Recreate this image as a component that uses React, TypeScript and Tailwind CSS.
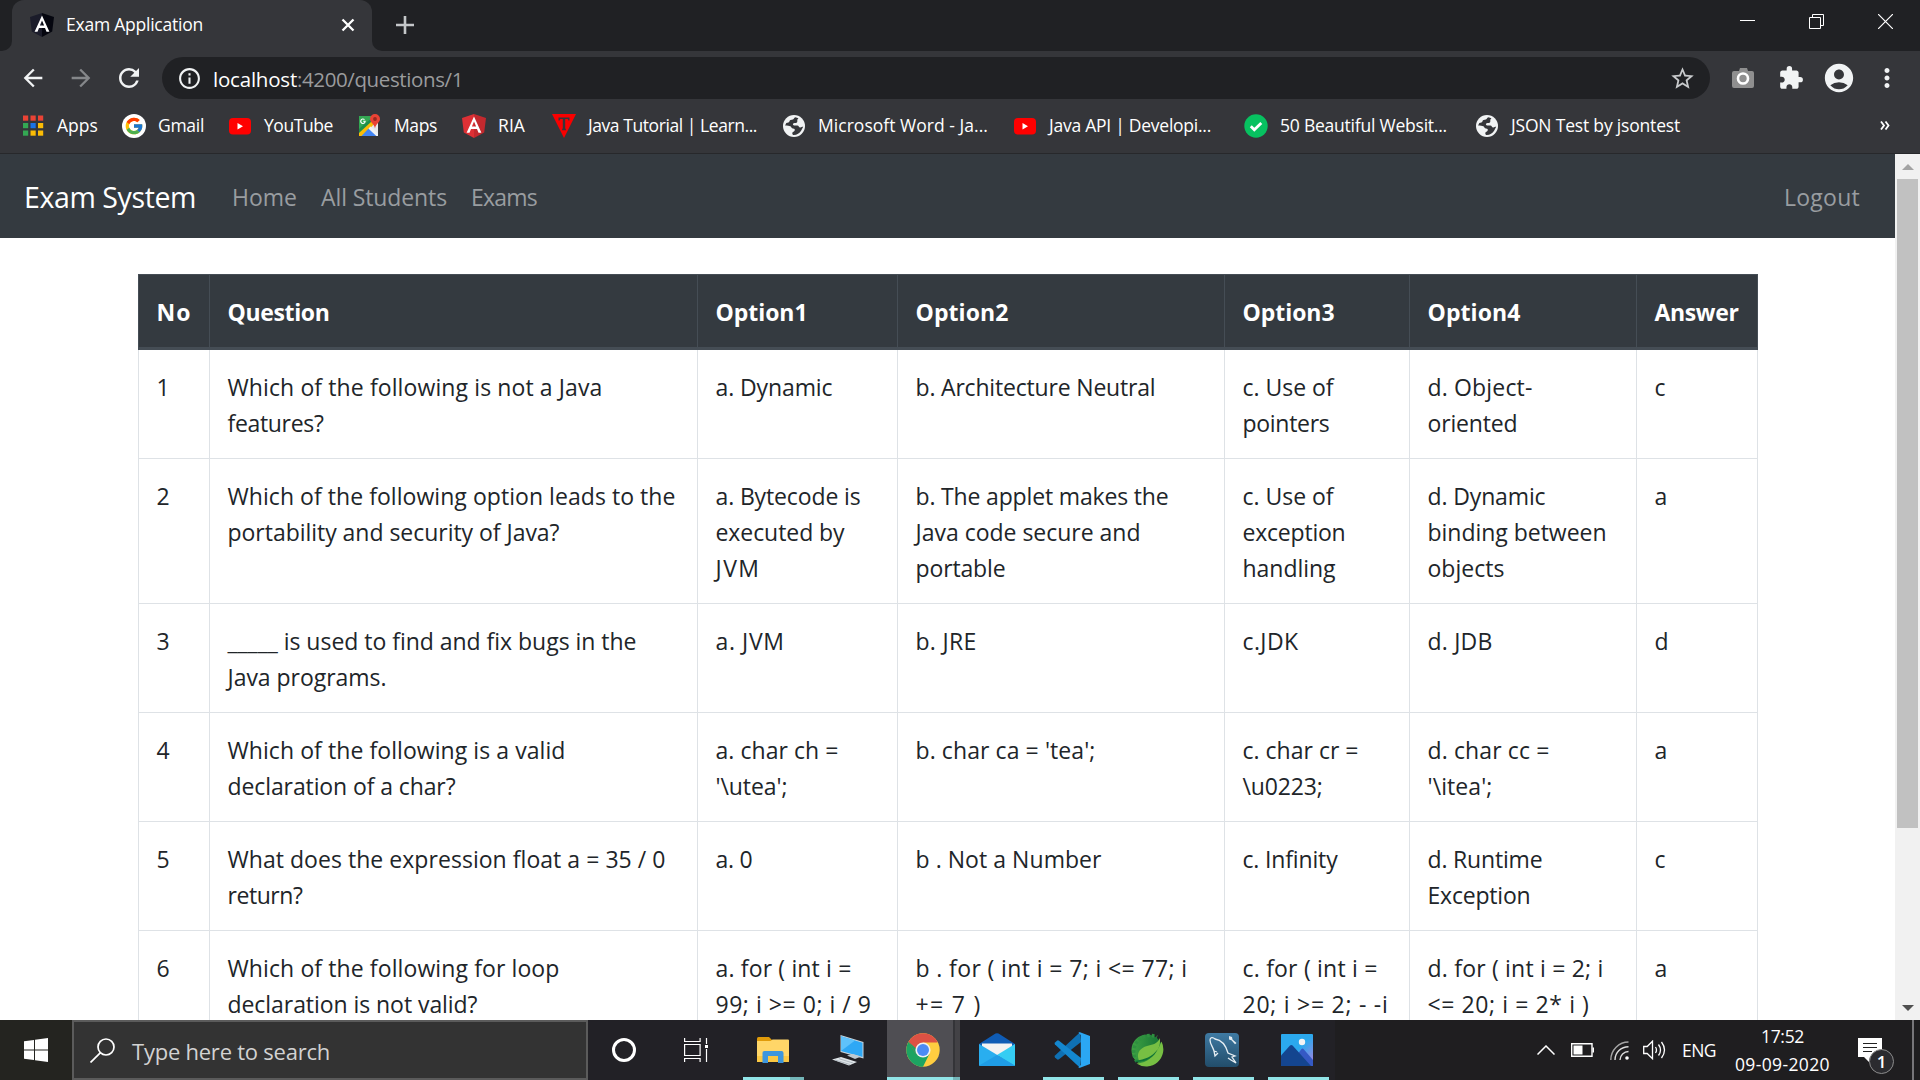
import React, { useLayoutEffect, useRef } from "react";
import {
  MdAccountCircle,
  MdArrowBack,
  MdArrowForward,
  MdExtension,
  MdInfoOutline,
  MdMoreVert,
  MdRefresh,
  MdStarBorder,
} from "react-icons/md";
import { FcGoogle } from "react-icons/fc";

/** A single line of text whose tracking is tuned so that it spans `w` pixels. */
function Line({ w, className = "", children }: { w: number; className?: string; children: string }) {
  const ref = useRef<HTMLSpanElement>(null);
  useLayoutEffect(() => {
    const el = ref.current;
    if (!el) return;
    el.style.letterSpacing = "0px";
    const natural = el.getBoundingClientRect().width;
    el.style.letterSpacing = `${(w - natural) / children.length}px`;
  }, [w, children]);
  return (
    <span ref={ref} className={`inline-block whitespace-pre ${className}`}>
      {children}
    </span>
  );
}

/* ---------- icons ---------- */

function AngularIcon({ left, right, className = "" }: { left: string; right: string; className?: string }) {
  return (
    <svg viewBox="0 0 24 24" className={`h-6 w-6 ${className}`}>
      <path d="M12 0 0 4l1.800 14.600L12 24z" fill={left} />
      <path d="M12 0 24 4l-1.800 14.600L12 24z" fill={right} />
      <path d="M12 2.500 4.600 18.700h2.900l1.500-3.700h6l1.500 3.700h2.900zm2.100 10h-4.200L12 7.500z" fill="#fff" />
    </svg>
  );
}

function AppsIcon() {
  const colors = ["#ea4335", "#ea4335", "#ea4335", "#34a853", "#1a73e8", "#fbbc05", "#34a853", "#fbbc05", "#fbbc05"];
  return (
    <svg viewBox="0 0 24 24" className="h-6 w-6">
      {colors.map((c, i) => (
        <rect key={i} x={2 + (i % 3) * 7.5} y={1.5 + Math.floor(i / 3) * 7.5} width="5.2" height="5.2" fill={c} />
      ))}
    </svg>
  );
}

function GmailIcon() {
  return (
    <span className="flex h-6 w-6 items-center justify-center rounded-full bg-white">
      <FcGoogle size={20} />
    </span>
  );
}

function YouTubeIcon() {
  return (
    <svg viewBox="0 0 24 24" className="h-6 w-6">
      <rect x="1" y="4" width="22" height="16.5" rx="4" fill="#f00" />
      <path d="M9.500 9 15 12.200l-5.500 3.200z" fill="#fff" />
    </svg>
  );
}

function MapsIcon() {
  return (
    <svg viewBox="0 0 24 24" className="h-6 w-6">
      <path d="M1 2h19v20H1z" fill="#e8eaed" />
      <path d="M1 2h14L1 17z" fill="#34a853" />
      <path d="M1 17.500 15 3l2 6L5 22H1z" fill="#fbbc05" />
      <path d="M1 15 13 4v4L1 19z" fill="#1e8e4a" />
      <path d="m10.500 14.500 8 7.500h-15z" fill="#4285f4" />
      <path d="m10.500 14.500 2-2L20 20v2h-1.500z" fill="#f1f3f4" />
      <path d="M7.600 6.800H5.200v1h1.300c-.2.8-.7 1.100-1.400 1.100a1.700 1.700 0 1 1 1-3l.8-.7a2.800 2.800 0 1 0 .8 1.600z" fill="#fff" />
      <path d="M17 0a5 5 0 0 0-5 5c0 3.500 4.200 4.500 5 9.500.8-5 5-6 5-9.500a5 5 0 0 0-5-5z" fill="#ea4335" />
      <circle cx="17" cy="5" r="1.900" fill="#962a21" />
    </svg>
  );
}

function TutorialIcon() {
  return (
    <svg viewBox="0 0 24 24" className="h-6 w-6">
      <path d="M0 0h24L12 24z" fill="#f90000" />
      <path d="M6.500 3.500h11v3h-1.200l-.6-1.400h-2.500v9l1 2.200h-4.400l1-2.200v-9H8.300l-.6 1.400H6.500z" fill="#35363a" />
    </svg>
  );
}

function GlobeIcon() {
  return (
    <svg viewBox="0 0 24 24" className="h-6 w-6">
      <circle cx="12" cy="12" r="11" fill="#f1f3f4" />
      <path
        d="M13.500 3.200c-2 .4-1.200 1.900-2.600 2.400-1.600.5-3 .2-3.400 1.700-.3 1.200-1.600 1.600-3.200 1.600l-1.200 2.600c2.400.2 4 .2 5.300.8 1.300.7 1 2.200 2.600 2.300 1.500.1 2 .6 1.700 1.800-.5 1.400-1.900 1-2.300 2.300-.3 1 .1 1.700.7 2.300 3.300.3 6.300-1.400 8-4.200l2.100-4c-1.300-.1-1.800.7-3 .6-1.500-.1-1.300-1.900-2.900-2-1.700-.1-3.800.6-4.300-.6-.6-1.400 1.300-1.800 2.700-1.800 1.500 0 1.700-1.300 1.600-2.300-.1-1.300.6-1.900 1.100-2.400z"
        fill="#35363a"
      />
    </svg>
  );
}

function CheckIcon() {
  return (
    <svg viewBox="0 0 24 24" className="h-6 w-6">
      <circle cx="12" cy="12" r="11.700" fill="#07c160" />
      <path d="m6.800 12.200 3.500 3.500 7-6.700" fill="none" stroke="#fff" strokeWidth="2.800" />
    </svg>
  );
}

/* ---------- browser chrome ---------- */

function TabStrip() {
  return (
    <div className="flex h-[51px] bg-[#202124]">
      <div className="flex w-3 items-end bg-[#35363a]">
        <div className="h-full w-3 rounded-br-[10px] bg-[#202124]" />
      </div>
      <div className="flex w-[360px] items-center rounded-t-[12px] bg-[#35363a] pb-px pl-[18px]">
        <AngularIcon left="#1b1c2a" right="#05060f" />
        <div className="ml-3 flex-1 pb-px text-[17.500px] text-white">
          <Line w={137}>Exam Application</Line>
        </div>
        <svg viewBox="0 0 14 14" className="mr-[17px] h-[14px] w-[14px]">
          <path d="m1.500 1.500 11 11m0-11-11 11" stroke="#fff" strokeWidth="2.300" />
        </svg>
      </div>
      <div className="w-3 bg-[#35363a]">
        <div className="h-full w-3 rounded-bl-[10px] bg-[#202124]" />
      </div>
      <div className="flex flex-1 items-center pb-px">
        <svg viewBox="0 0 18 18" className="ml-3 h-[18px] w-[18px]">
          <path d="M9 0v18M0 9h18" stroke="#c4c7c9" strokeWidth="2.600" />
        </svg>
      </div>
      <div className="mt-[14px] flex gap-[54px] pr-[27px]">
        <svg viewBox="0 0 15 15" className="h-[15px] w-[15px]">
          <path d="M0 6.500h15" stroke="#fff" />
        </svg>
        <svg viewBox="0 0 15 15" className="h-[15px] w-[15px]" fill="none" stroke="#fff">
          <path d="M.5 3.500h11v11H.5zM3.500 3.500v-3h11v11h-3" />
        </svg>
        <svg viewBox="0 0 15 15" className="h-[15px] w-[15px]">
          <path d="m0 0 15 15M15 0 0 15" stroke="#fff" strokeWidth="1.200" />
        </svg>
      </div>
    </div>
  );
}

function Toolbar() {
  return (
    <div className="flex h-[54px] items-center bg-[#35363a] pl-[19px] text-[#f1f3f4]">
      <MdArrowBack size={28} className="mb-px" />
      <MdArrowForward size={28} className="mb-px ml-5 text-[#85878a]" />
      <MdRefresh size={30} className="mb-px ml-[19px]" />
      <div className="ml-[18px] flex h-[42px] w-[1548px] items-center rounded-full bg-[#202124] pl-[15px] pr-[14px]">
        <MdInfoOutline size={25} />
        <div className="ml-[11px] flex-1 pt-[2px] text-[20.500px] text-white">
          <Line w={84}>localhost</Line>
          <Line w={166} className="text-[#9a9b9d]">
            :4200/questions/1
          </Line>
        </div>
        <MdStarBorder size={27} className="text-[#c8cacc]" />
      </div>
      <svg viewBox="0 0 24 22" className="ml-[21px] h-[22px] w-6">
        <path d="M3 4h5l1-3h7l1 3h4a2 2 0 0 1 2 2v13a2 2 0 0 1-2 2H3a2 2 0 0 1-2-2V6a2 2 0 0 1 2-2z" fill="#8f8f8f" />
        <circle cx="12" cy="11.500" r="5" fill="#8f8f8f" stroke="#fff" strokeWidth="2.600" />
      </svg>
      <MdExtension size={26} className="mb-px ml-[23px]" />
      <MdAccountCircle size={34} className="mb-px ml-[18px]" />
      <MdMoreVert size={30} className="mb-px ml-4" />
    </div>
  );
}

const bookmarks: { icon: React.ReactNode; label: string; w: number; box: string }[] = [
  { icon: <AppsIcon />, label: "Apps", w: 41, box: "w-[41px]" },
  { icon: <GmailIcon />, label: "Gmail", w: 46, box: "w-[46px]" },
  { icon: <YouTubeIcon />, label: "YouTube", w: 69, box: "w-[70px]" },
  { icon: <MapsIcon />, label: "Maps", w: 43, box: "w-[44px]" },
  { icon: <AngularIcon left="#dd3035" right="#c2292e" />, label: "RIA", w: 27, box: "w-[30px]" },
  { icon: <TutorialIcon />, label: "Java Tutorial | Learn...", w: 169, box: "w-[170px]" },
  { icon: <GlobeIcon />, label: "Microsoft Word - Ja...", w: 170, box: "w-[171px]" },
  { icon: <YouTubeIcon />, label: "Java API | Developi...", w: 162, box: "w-[171px]" },
  { icon: <CheckIcon />, label: "50 Beautiful Websit...", w: 167, box: "w-[171px]" },
  { icon: <GlobeIcon />, label: "JSON Test by jsontest", w: 169, box: "w-[170px]" },
];

function BookmarkBar() {
  return (
    <div className="flex h-[49px] items-center border-b border-[#27282b] bg-[#35363a] pl-[21px] pb-[7px] text-[17.500px] text-white">
      <div className="flex flex-1 gap-6">
        {bookmarks.map((b) => (
          <div key={b.label} className="flex items-center gap-3">
            {b.icon}
            <div className={`${b.box} mb-[2px] whitespace-nowrap leading-[22px]`}>
              <Line w={b.w}>{b.label}</Line>
            </div>
          </div>
        ))}
      </div>
      <svg viewBox="0 0 10 9" className="mr-[30px] h-[9px] w-[10px]">
        <path d="m1 .5 3 4-3 4m4.500-8 3 4-3 4" fill="none" stroke="#fff" strokeWidth="1.800" />
      </svg>
    </div>
  );
}

/* ---------- page ---------- */

function Navbar() {
  return (
    <nav className="flex h-[84px] items-center bg-[#343a40] pl-6 pr-[35px] pt-[2px] text-[23px] text-[#999da0]">
      <div className="w-[208px] text-[28.500px] text-white">
        <Line w={172}>Exam System</Line>
      </div>
      <div className="flex flex-1 gap-6">
        <Line w={65}>Home</Line>
        <Line w={126}>All Students</Line>
        <Line w={66}>Exams</Line>
      </div>
      <Line w={76}>Logout</Line>
    </nav>
  );
}

type Cell = [string, number][];

const headers: [string, number][] = [
  ["No", 35],
  ["Question", 102],
  ["Option1", 92],
  ["Option2", 93],
  ["Option3", 92],
  ["Option4", 93],
  ["Answer", 84],
];

const rows: Cell[][] = [
  [
    [["1", 13]],
    [["Which of the following is not a Java", 375], ["features?", 96]],
    [["a. Dynamic", 117]],
    [["b. Architecture Neutral", 240]],
    [["c. Use of", 91], ["pointers", 87]],
    [["d. Object-", 105], ["oriented", 90]],
    [["c", 11]],
  ],
  [
    [["2", 13]],
    [["Which of the following option leads to the", 448], ["portability and security of Java?", 332]],
    [["a. Bytecode is", 145], ["executed by", 129], ["JVM", 45]],
    [["b. The applet makes the", 253], ["Java code secure and", 225], ["portable", 90]],
    [["c. Use of", 91], ["exception", 103], ["handling", 93]],
    [["d. Dynamic", 118], ["binding between", 179], ["objects", 77]],
    [["a", 12]],
  ],
  [
    [["3", 13]],
    [["_____ is used to find and fix bugs in the", 409], ["Java programs.", 159]],
    [["a. JVM", 69]],
    [["b. JRE", 61]],
    [["c.JDK", 56]],
    [["d. JDB", 65]],
    [["d", 14]],
  ],
  [
    [["4", 13]],
    [["Which of the following is a valid", 338], ["declaration of a char?", 228]],
    [["a. char ch =", 123], ["'\\utea';", 72]],
    [["b. char ca = 'tea';", 180]],
    [["c. char cr =", 116], ["\\u0223;", 80]],
    [["d. char cc =", 122], ["'\\itea';", 65]],
    [["a", 12]],
  ],
  [
    [["5", 13]],
    [["What does the expression float a = 35 / 0", 438], ["return?", 75]],
    [["a. 0", 37]],
    [["b . Not a Number", 186]],
    [["c. Infinity", 95]],
    [["d. Runtime", 115], ["Exception", 103]],
    [["c", 11]],
  ],
  [
    [["6", 13]],
    [["Which of the following for loop", 332], ["declaration is not valid?", 250]],
    [["a. for ( int i =", 136], ["99; i >= 0; i / 9", 156]],
    [["b . for ( int i = 7; i <= 77; i", 272], ["+= 7 )", 66]],
    [["c. for ( int i =", 135], ["20; i >= 2; - -i", 146]],
    [["d. for ( int i = 2; i", 176], ["<= 20; i = 2* i )", 162]],
    [["a", 12]],
  ],
];

const columns = "grid grid-cols-[71px_488px_200px_327px_185px_227px_122px]";

function QuestionTable() {
  return (
    <div className="ml-[138px] mt-9 w-[1620px] text-[23px] leading-9">
      <div className={`${columns} h-[76px] border-b-[3px] border-t border-[#454d55] bg-[#343a40] font-bold text-white`}>
        {headers.map(([h, w], i) => (
          <div key={h} className={`border-l border-[#454d55] pl-[17.500px] pt-[19px] ${i === 6 ? "border-r" : ""}`}>
            <Line w={w}>{h}</Line>
          </div>
        ))}
      </div>
      {rows.map((r, n) => (
        <div key={n} className={`${columns} border-b border-[#dee2e6] text-[#212529]`}>
          {r.map((cell, i) => (
            <div key={i} className={`border-l border-[#dee2e6] pb-[17px] pl-[17.500px] pt-[19px] ${i === 6 ? "border-r" : ""}`}>
              {cell.map(([text, w]) => (
                <div key={text} className="h-9">
                  <Line w={w}>{text}</Line>
                </div>
              ))}
            </div>
          ))}
        </div>
      ))}
    </div>
  );
}

function Scrollbar() {
  return (
    <div className="flex w-[25px] flex-col items-center bg-[#f1f1f1]">
      <div className="flex h-[25px] items-center">
        <svg viewBox="0 0 12 6" className="h-[6px] w-3">
          <path d="m0 6 6-6 6 6z" fill="#a3a3a3" />
        </svg>
      </div>
      <div className="h-[649px] w-[21px] bg-[#c1c1c1]" />
      <div className="flex-1" />
      <svg viewBox="0 0 12 6" className="mb-[9px] h-[6px] w-3">
        <path d="m0 0 6 6 6-6z" fill="#505050" />
      </svg>
    </div>
  );
}

/* ---------- taskbar ---------- */

function ExplorerIcon() {
  return (
    <svg viewBox="0 0 36 36" className="h-9 w-9">
      <path d="M2 6.500a1.500 1.500 0 0 1 1.500-1.500H14l3 3v5H2z" fill="#e09b0a" />
      <path d="M2 9h13.500l2-1.500H33a1 1 0 0 1 1 1V29a1 1 0 0 1-1 1H2z" fill="#ffd668" />
      <path d="M2 24h32v5a1 1 0 0 1-1 1H2z" fill="#fbc843" />
      <path d="M9.500 19h17a2 2 0 0 1 2 2v10h-5.500v-7H13v7H7.500V21a2 2 0 0 1 2-2z" fill="#3d96dd" />
    </svg>
  );
}

function ComputerIcon() {
  return (
    <svg viewBox="0 0 36 36" className="h-9 w-9">
      <path d="m10.500 3 23 7v16.500l-23-6.500z" fill="#c9d3da" />
      <path d="m11 4.200 21.500 6.600v14.200L11 19z" fill="#2fa8f5" />
      <path d="m11 4.200 14 4.300L11 19z" fill="#5fc2fb" />
      <path d="m17 23.500 6-1.500 8 2.500-6 2.500z" fill="#bfc9d0" />
      <path d="m2 27.500 9-2.500 16 5-8 3.500z" fill="#dfe4e8" />
      <path d="m5 28 15 4.500M9 26.700l14 4.300" stroke="#a3adb5" strokeWidth=".8" />
    </svg>
  );
}

function ChromeIcon() {
  return (
    <svg viewBox="0 0 36 36" className="h-9 w-9">
      <circle cx="18" cy="18" r="16.700" fill="#ffcd40" />
      <path d="M18 18 3.540 9.650A16.700 16.700 0 0 1 32.460 9.650L32 10.500H18z" fill="#dd5144" />
      <path d="M3.540 9.650A16.700 16.700 0 0 0 18 34.700l6.500-13L18 18l-7 2.500z" fill="#1da462" />
      <path d="M3.540 9.650 10.500 21.500 18 18V10.500z" fill="#dd5144" />
      <path d="m3.540 9.650 7.400 12.500 2-4z" fill="#1da462" />
      <circle cx="18" cy="18" r="7.600" fill="#f1f1f1" />
      <circle cx="18" cy="18" r="6" fill="#4c8bf5" />
    </svg>
  );
}

function MailIcon() {
  return (
    <svg viewBox="0 0 36 36" className="h-9 w-9">
      <path d="M0 12 16.500 1.600q1.500-.9 3 0L36 12v4H0z" fill="#0f5cb5" />
      <path d="M3 11.500h30V18L18 25 3 18z" fill="#f2f2f2" />
      <path d="M36 12v21a1 1 0 0 1-1 1L18 23z" fill="#35cdf3" />
      <path d="M0 12v21a1 1 0 0 0 1 1h34q.5 0 .8-.4z" fill="#29aeef" />
      <path d="m18 23 17.800 10.600q-.3.400-.8.400H1q-.5 0-.8-.4z" fill="#1f9de6" />
    </svg>
  );
}

function CodeIcon() {
  return (
    <svg viewBox="0 0 36 36" className="h-9 w-9">
      <path d="M26 .2 1 23.500q-.9 1 0 2l2 1.800q.9.700 2 0L27 10z" fill="#0f70b3" />
      <path d="M26 35.800 1 12.500q-.9-1 0-2l2-1.800q.9-.7 2 0L27 26z" fill="#1487cf" />
      <path d="M26 .2 36 4v28l-10 3.800q-1 .2-1.600-.6L26.800 33V3L24.400.8q.6-.8 1.600-.6z" fill="#2ba7f3" />
    </svg>
  );
}

function SpringIcon() {
  return (
    <svg viewBox="0 0 36 36" className="h-9 w-9">
      <defs>
        <linearGradient id="gear" x1="0" y1="0" x2="1" y2="0">
          <stop offset="0" stopColor="#3fa243" />
          <stop offset=".8" stopColor="#1b7a37" />
        </linearGradient>
      </defs>
      <circle cx="18" cy="18" r="15.500" fill="url(#gear)" />
      <path
        d="M8 29.500A16.300 16.300 0 0 1 28 5"
        fill="none"
        stroke="#2f9040"
        strokeWidth="3.400"
        strokeDasharray="2.600 2.100"
      />
      <path d="M32.500 9.500A17.200 17.200 0 0 1 7.500 31.500C18 31 27 24 32.500 9.500z" fill="#77bf43" />
      <path d="M31 6c-3 6.500-8 6.500-13 8-7 2-9.500 6.500-9 11 .2 1.500.6 2.500 1 3.500C22 29 32 20 31 6z" fill="#77bf43" />
      <path d="M6.500 30.200C18 29.500 25 25.500 28.500 17.500 23 25 16 27.500 6.500 28.700z" fill="#0f7336" />
    </svg>
  );
}

function MysqlIcon() {
  return (
    <svg viewBox="0 0 36 36" className="h-9 w-9">
      <defs>
        <linearGradient id="mysql" x1="0" y1="0" x2="0" y2="1">
          <stop offset="0" stopColor="#3f7aa3" />
          <stop offset="1" stopColor="#224d6a" />
        </linearGradient>
      </defs>
      <rect x="1" y="1" width="34" height="34" rx="4" fill="url(#mysql)" />
      <path
        d="M10 19c-1-4-4-7-4-11 0-3 3-3 5-1 7 1 11 7 13 14l7 3-3 1 4 6-5-3-3-2M10 19l1 5 3-3m-4-2 3 1"
        fill="none"
        stroke="#e6eef3"
        strokeWidth="1.300"
      />
      <path d="m25 4 3 1 .5 2.500 4 3.500-1.500 1.200-3.500-4-2.500-.7z" fill="#e6eef3" />
    </svg>
  );
}

function PhotosIcon() {
  return (
    <svg viewBox="0 0 36 36" className="h-9 w-9">
      <defs>
        <linearGradient id="sky" x1="0" y1="0" x2="1" y2="1">
          <stop offset=".5" stopColor="#2ba9ee" />
          <stop offset="1" stopColor="#b07fe0" />
        </linearGradient>
      </defs>
      <rect x="2" y="2" width="32" height="32" rx="1" fill="url(#sky)" />
      <path d="m18 23 4.500-6q1-1 2 0L34 28v6H18z" fill="#3559c4" />
      <path d="M2 23.500 11 13.600q1.300-1.200 2.600 0L32 34H2z" fill="#14458f" />
      <circle cx="23" cy="10" r="3.200" fill="#f4f4f4" />
    </svg>
  );
}

const apps: { icon: React.ReactNode; open: boolean }[] = [
  { icon: <MailIcon />, open: false },
  { icon: <CodeIcon />, open: true },
  { icon: <SpringIcon />, open: true },
  { icon: <MysqlIcon />, open: true },
  { icon: <PhotosIcon />, open: true },
];

function Taskbar() {
  return (
    <div className="flex h-[60px] bg-[#222126] text-white">
      <div className="flex w-[72px] items-center justify-center bg-[#242420]">
        <svg viewBox="0 0 24 24" className="h-6 w-6" fill="#fff">
          <path d="M0 3.300 10 1.900v9.600H0zM11 1.800 24 0v11.500H11zM0 12.500h10v9.600L0 20.700zM11 12.500h13V24l-13-1.800z" />
        </svg>
      </div>
      <div className="flex w-[516px] items-center border-2 border-[#5b5b5b] bg-[#333] pl-4">
        <svg viewBox="0 0 25 25" className="h-[25px] w-[25px]" fill="none" stroke="#fff" strokeWidth="1.700">
          <circle cx="16" cy="9" r="8" />
          <path d="M10.500 14.700.5 24.500" />
        </svg>
        <div className="ml-[17px] pt-[2px] text-[22px] text-[#d2d2d2]">
          <Line w={198}>Type here to search</Line>
        </div>
      </div>
      <div className="flex w-[72px] items-center justify-center">
        <div className="h-6 w-6 rounded-full border-[3px] border-white" />
      </div>
      <div className="flex w-[75px] items-center pl-6">
        <svg viewBox="0 0 24 24" className="h-6 w-6" fill="none" stroke="#fff" strokeWidth="1.200">
          <path d="M.6 0v3.500h15.500V0M.6 6.500h15.500v11H.6zM.6 24v-3.500h15.500V24M22.500 0v6M22.500 11v13" />
          <path d="M21 7h3v3h-3z" fill="#fff" stroke="none" />
        </svg>
      </div>
      <div className="flex w-[76px] flex-col items-center">
        <div className="flex h-[57px] items-center pt-[3px]">
          <ExplorerIcon />
        </div>
        <div className="flex h-[3px] w-[61px] bg-[#91e4e7]">
          <div className="ml-auto w-[14px] bg-[#74b6b9]" />
        </div>
      </div>
      <div className="flex w-[76px] items-center justify-center pr-[3px]">
        <ComputerIcon />
      </div>
      <div className="flex w-[73px] flex-col bg-[#4f4e53]">
        <div className="flex h-[57px] justify-between">
          <div className="flex items-center pl-[18px] pt-[3px]">
            <ChromeIcon />
          </div>
          <div className="w-[7px] border-l-2 border-[#343438] bg-[#434246]" />
        </div>
        <div className="flex h-[3px] bg-[#91e4e7]">
          <div className="ml-auto w-[7px] bg-[#74b6b9]" />
        </div>
      </div>
      {apps.map((a, i) => (
        <div key={i} className="flex w-[75px] flex-col items-end pr-[6px]">
          <div className="flex h-[57px] items-center pr-[14px] pt-[3px]">{a.icon}</div>
          {a.open && <div className="h-[3px] w-[61px] bg-[#91e4e7]" />}
        </div>
      ))}
      <div className="flex flex-1 items-center justify-end bg-[#1f1e20] text-[17.500px]">
        <svg viewBox="0 0 18 10" className="h-[10px] w-[18px]" fill="none" stroke="#fff" strokeWidth="1.500">
          <path d="m.5 9.500 8.500-8.500 8.500 8.500" />
        </svg>
        <svg viewBox="0 0 23 14" className="ml-4 h-[14px] w-[23px]" fill="none" stroke="#fff">
          <path d="M.7.700h20.300v12.500H.7z" strokeWidth="1.400" />
          <path d="M2.500 2.500h9v9h-9zM21.500 4.500h1.500v5h-1.500z" fill="#fff" stroke="none" />
        </svg>
        <svg viewBox="0 0 19 19" className="ml-4 h-[19px] w-[19px]" fill="none" strokeWidth="1.400">
          <path d="M.8 19C.8 9 9 1 18.500 1" stroke="#a5a5a5" />
          <path d="M5 19C5 11.500 11 5.800 18.500 5.800M10 19c0-4.500 4-8.500 8.500-8.500" stroke="#ddd" />
          <circle cx="17" cy="17" r="1.800" fill="#fff" />
        </svg>
        <svg viewBox="0 0 23 20" className="ml-[14px] h-5 w-[23px]" fill="none" stroke="#fff" strokeWidth="1.300">
          <path d="M.7 6.500h3.500L9.500 1.200v17.500l-5.300-5.200H.7z" />
          <path d="M12.500 7q2 3 0 6M15.500 4.500q4 5.500 0 11M18.500 2q6 8 0 16" />
        </svg>
        <div className="ml-4 w-[53px]">
          <Line w={34}>ENG</Line>
        </div>
        <div className="w-[95px] text-center leading-7">
          <div className="h-7">
            <Line w={43}>17:52</Line>
          </div>
          <div className="h-7">
            <Line w={95}>09-09-2020</Line>
          </div>
        </div>
        <div className="relative ml-7 h-9 w-9">
          <svg viewBox="0 0 36 36" className="mt-[6px] h-9 w-9">
            <path d="M0 0h24v19H12l-1 5-5-5H0z" fill="#fff" />
            <path d="M5 5.500h14M5 9.500h14M5 13.500h9" stroke="#222" strokeWidth="1.100" />
          </svg>
          <div className="absolute left-[11px] top-[17px] flex h-[25px] w-[25px] items-center justify-center rounded-full border border-[#8c8c8c] bg-[#2b2b2f] text-[17px] font-semibold leading-none">
            1
          </div>
        </div>
        <div className="ml-[18px] h-full w-2 border-l-2 border-[#77767a]" />
      </div>
    </div>
  );
}

export default function App() {
  return (
    <div className="flex h-[1080px] w-[1920px] flex-col overflow-hidden bg-white font-['Open_Sans',sans-serif]">
      <TabStrip />
      <Toolbar />
      <BookmarkBar />
      <div className="flex h-[866px]">
        <div className="flex-1 overflow-hidden">
          <Navbar />
          <QuestionTable />
        </div>
        <Scrollbar />
      </div>
      <Taskbar />
    </div>
  );
}
